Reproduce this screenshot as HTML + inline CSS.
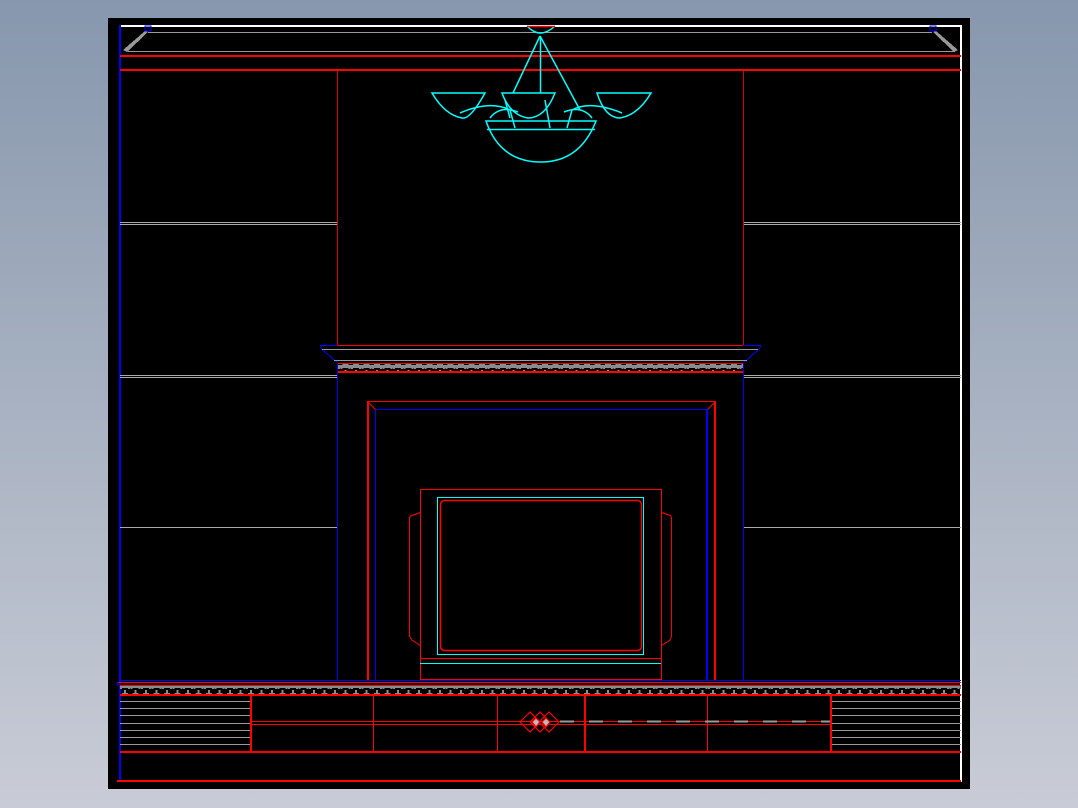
<!DOCTYPE html>
<html><head><style>
html,body{margin:0;padding:0;width:1078px;height:808px;overflow:hidden;background:linear-gradient(#8797ad,#c9ccd6);}
svg{position:absolute;left:0;top:0}
</style></head><body>
<svg width="1078" height="808" viewBox="0 0 1078 808" shape-rendering="crispEdges">
<defs>
<pattern id="dent" x="120" y="0" width="10.5" height="10" patternUnits="userSpaceOnUse">
<rect x="0" y="5" width="10.5" height="3" fill="#8c8c8c"/>
<rect x="4" y="0" width="2" height="5" fill="#8c8c8c"/>
<rect x="2" y="3" width="6" height="2" fill="#8c8c8c"/>
<rect x="0" y="8" width="2" height="1" fill="#8c8c8c"/>
<rect x="8" y="8" width="2" height="1" fill="#8c8c8c"/>
</pattern>
</defs>
<rect x="108" y="18" width="862" height="771" fill="#000"/>
<g>
<rect x="120" y="25" width="842" height="2" fill="#fff"/>
<rect x="960" y="25" width="2" height="757" fill="#fff"/>
<rect x="119" y="25" width="2" height="757" fill="#00f"/>
<rect x="148" y="32" width="784" height="1" fill="#999"/>
<rect x="128" y="51" width="827" height="1" fill="#999"/>
<rect x="120" y="55" width="841" height="2" fill="#f00"/>
<rect x="120" y="69" width="841" height="2" fill="#f00"/>
<rect x="117" y="780" width="844" height="2" fill="#f00"/>
<path d="M123 50 L145 31 L148 32 L127 52 Z" fill="#999"/>
<path d="M958 50 L936 31 L933 32 L954 52 Z" fill="#999"/>
<rect x="145" y="26" width="6" height="5" fill="none" stroke="#00f"/>
<rect x="930" y="26" width="6" height="5" fill="none" stroke="#00f"/>
<rect x="337" y="70" width="1" height="275" fill="#d00"/>
<rect x="743" y="70" width="1" height="275" fill="#d00"/>
<rect x="337" y="345" width="406" height="1" fill="#f00"/>
<g fill="#aaa">
<rect x="120" y="222" width="217" height="1"/><rect x="120" y="224" width="217" height="1"/>
<rect x="744" y="222" width="217" height="1"/><rect x="744" y="224" width="217" height="1"/>
<rect x="120" y="375" width="217" height="1"/><rect x="120" y="377" width="217" height="1"/>
<rect x="744" y="375" width="217" height="1"/><rect x="744" y="377" width="217" height="1"/>
<rect x="120" y="527" width="217" height="1"/>
<rect x="744" y="527" width="217" height="1"/>
</g>
<path d="M337.5 345.5 L320.5 345.5 L321.5 349 L325 352 L330 356 L334 360 L337.5 362" stroke="#00f" fill="none"/>
<path d="M743.5 345.5 L760.5 345.5 L759.5 349 L756 352 L751 356 L747 360 L743.5 362" stroke="#00f" fill="none"/>
<rect x="322" y="349" width="436" height="1" fill="#999"/>
<rect x="334" y="360" width="413" height="1" fill="#999"/>
<rect x="337" y="363" width="406" height="9" fill="url(#dent)"/>
<rect x="337" y="363" width="406" height="1" fill="#f00"/>
<rect x="337" y="371" width="406" height="2" fill="#f00"/>
<rect x="337" y="363" width="1" height="317" fill="#00f"/>
<rect x="743" y="363" width="1" height="317" fill="#00f"/>
<rect x="367" y="401" width="2" height="279" fill="#f00"/>
<rect x="714" y="401" width="2" height="279" fill="#f00"/>
<rect x="367" y="401" width="349" height="1" fill="#f00"/>
<rect x="375" y="409" width="1" height="271" fill="#00f"/>
<rect x="706" y="409" width="2" height="271" fill="#00f"/>
<rect x="375" y="409" width="333" height="1" fill="#00f"/>
<path d="M367.5 401.5 L375.5 409.5 M715.5 401.5 L707.5 409.5" stroke="#f00" shape-rendering="auto"/>
<rect x="420.5" y="489.5" width="241" height="190" stroke="#f00" fill="none"/>
<rect x="437.5" y="497.5" width="206" height="157" stroke="#0ff" fill="none"/>
<rect x="440.5" y="500.5" width="201" height="150" rx="4" stroke="#f00" fill="none" stroke-width="1.5" shape-rendering="auto"/>
<rect x="420" y="658" width="241" height="1" fill="#f00"/>
<rect x="420" y="663" width="241" height="1" fill="#0ff"/>
<path d="M420.5 512.5 L411.5 515.5 L409.5 517.5 V636.5 L412.5 640.5 L420.5 645.5" stroke="#f00" fill="none"/>
<path d="M661.5 512.5 L670.5 515.5 L671.5 517.5 V636.5 L669.5 640.5 L661.5 645.5" stroke="#f00" fill="none"/>
<rect x="120" y="680" width="841" height="1" fill="#00f"/>
<rect x="117" y="682" width="844" height="1" fill="#f00"/>
<rect x="117" y="682" width="1" height="4" fill="#00f"/>
<rect x="120" y="686" width="841" height="8" fill="url(#dent)"/>
<rect x="120" y="685" width="841" height="1" fill="#f00"/>
<rect x="120" y="694" width="841" height="2" fill="#f00"/>
<g fill="#999">
<rect x="120" y="701" width="130" height="1"/><rect x="120" y="708" width="130" height="1"/>
<rect x="120" y="715" width="130" height="1"/><rect x="120" y="723" width="130" height="1"/>
<rect x="120" y="730" width="130" height="1"/><rect x="120" y="737" width="130" height="1"/>
<rect x="120" y="744" width="130" height="1"/>
<rect x="831" y="701" width="130" height="1"/><rect x="831" y="708" width="130" height="1"/>
<rect x="831" y="715" width="130" height="1"/><rect x="831" y="723" width="130" height="1"/>
<rect x="831" y="730" width="130" height="1"/><rect x="831" y="737" width="130" height="1"/>
<rect x="831" y="744" width="130" height="1"/>
</g>
<g fill="#f00">
<rect x="250" y="694" width="2" height="58"/><rect x="373" y="694" width="1" height="58"/>
<rect x="497" y="694" width="1" height="58"/><rect x="584" y="694" width="2" height="58"/>
<rect x="707" y="694" width="1" height="58"/><rect x="830" y="694" width="2" height="58"/>
<rect x="120" y="751" width="841" height="2"/>
<rect x="250" y="724" width="580" height="1"/>
<rect x="250" y="721" width="580" height="1"/>
</g>
<line x1="560" y1="721.5" x2="830" y2="721.5" stroke="#999" stroke-dasharray="14 15" stroke-width="2"/>
<g stroke="#f00" shape-rendering="auto" fill="none" stroke-width="1.2">
<path d="M530 712 L520 722 L530 732 L540 722 Z"/>
<path d="M540 712 L530 722 L540 732 L550 722 Z"/>
<path d="M549 712 L539 722 L549 732 L559 722 Z"/>
<path d="M536 718 L540 722 L536 727 L532 722 Z" fill="#bbb"/>
<path d="M546 718 L550 722 L546 727 L542 722 Z" fill="#bbb"/>
</g>
<g stroke="#0ff" shape-rendering="auto" stroke-width="1.5" fill="none">
<path d="M527 26 Q540 40 555 26"/>
<line x1="527" y1="26.5" x2="555" y2="26.5" stroke="#f00"/>
<line x1="540.5" y1="36" x2="540.5" y2="93"/>
<line x1="540" y1="36" x2="513" y2="93"/>
<line x1="540" y1="36" x2="580" y2="110"/>
<path d="M432 93 H485 Q470 120 462 118 Q445 115 432 93 Z"/>
<path d="M597 93 H651 Q638 115 620 118 Q605 118 597 93 Z"/>
<path d="M502 93 H555 Q545 118 528 118 Q510 115 502 93 Z"/>
<path d="M486 121 H596 Q580 162 541 162 Q500 162 486 121 Z"/>
<line x1="487" y1="129.5" x2="595" y2="129.5"/>
<path d="M460 113 Q490 100 510 110 L515 128 M490 118 Q500 105 518 112"/>
<path d="M622 113 Q590 100 572 110 L567 128 M592 118 Q582 105 564 112"/>
<path d="M505 100 L510 118 M545 100 L550 128"/>
</g>
</g>
</svg>
</body></html>
